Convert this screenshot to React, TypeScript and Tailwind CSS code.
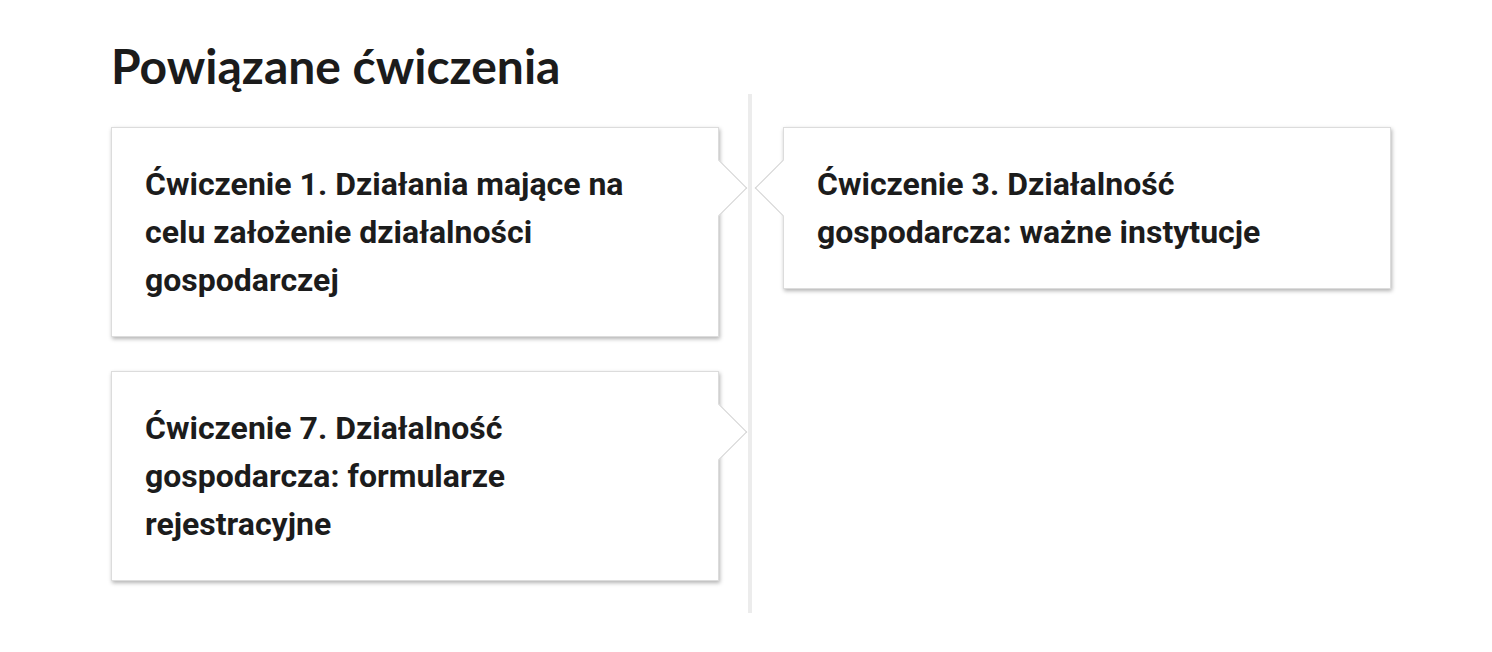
type Exercise = { title: string; side: "left" | "right" };

const leftColumn: Exercise[] = [
  { title: "Ćwiczenie 1. Działania mające na celu założenie działalności gospodarczej", side: "left" },
  { title: "Ćwiczenie 7. Działalność gospodarcza: formularze rejestracyjne", side: "left" },
];

const rightColumn: Exercise[] = [
  { title: "Ćwiczenie 3. Działalność gospodarcza: ważne instytucje", side: "right" },
];

function ExerciseCard({ title, side }: Exercise) {
  return (
    <a
      href="#"
      className="relative block bg-white border border-[#dcdcdc] shadow-[1px_2px_4px_rgba(0,0,0,0.3)] pl-[33px] pr-[75px] py-[32px]"
    >
      <span className="relative z-10 block text-[32px] leading-[48px] font-bold text-[#1c1c1c] font-['Roboto',sans-serif]">
        {title}
      </span>
      {/* notch pointing at the timeline */}
      {side === "left" ? (
        <span className="absolute top-[40px] -right-[21px] w-10 h-10 rotate-45 bg-white border-t border-r border-[#d3d3d3]" />
      ) : (
        <span className="absolute top-[40px] -left-[21px] w-10 h-10 rotate-45 bg-white border-b border-l border-[#d3d3d3]" />
      )}
    </a>
  );
}

export default function App() {
  return (
    <div className="min-h-screen bg-white pl-[111px] pt-[37px]">
      <h2 className="text-[48px] leading-[57px] font-bold text-[#1b1b1b] font-['Lato',sans-serif]">
        Powiązane ćwiczenia
      </h2>
      <div className="flex items-stretch pt-[33px] pb-[32px]">
        <div className="w-[608px] flex flex-col gap-[34px]">
          {leftColumn.map((e) => (
            <ExerciseCard key={e.title} {...e} />
          ))}
        </div>
        <div className="w-1 ml-[29px] mr-[31px] -mt-[33px] -mb-[32px] bg-[#ececec]" />
        <div className="w-[608px] flex flex-col gap-[34px]">
          {rightColumn.map((e) => (
            <ExerciseCard key={e.title} {...e} />
          ))}
        </div>
      </div>
    </div>
  );
}
